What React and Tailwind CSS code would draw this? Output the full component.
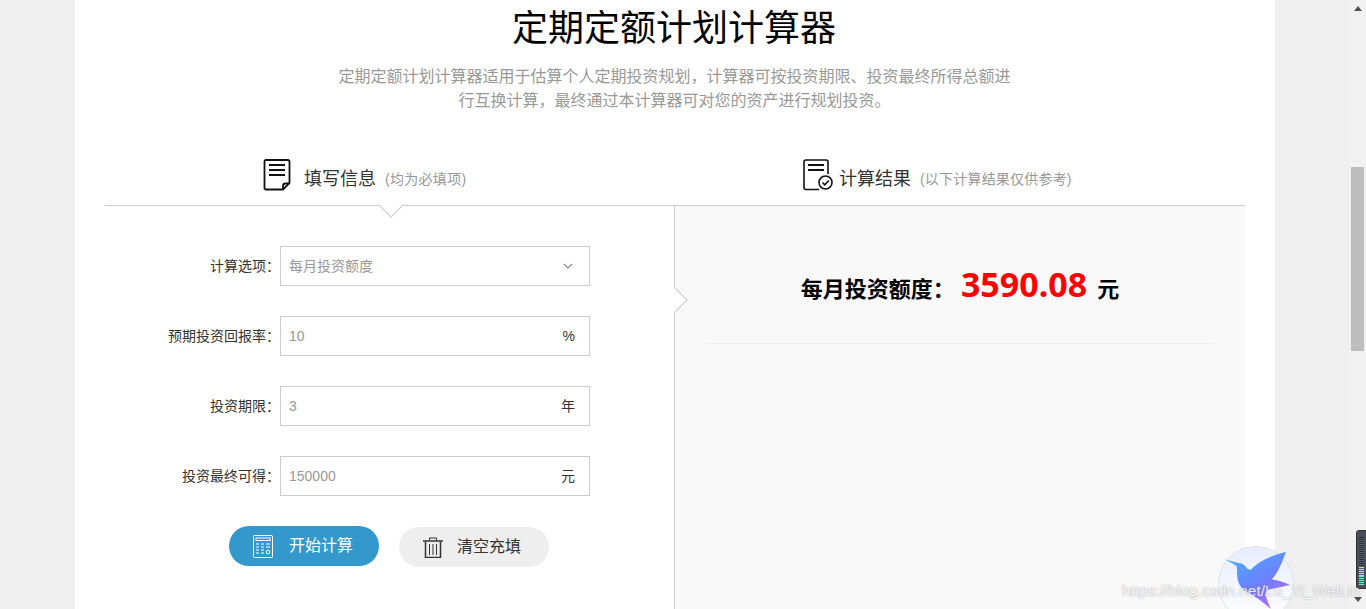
const cjk = { fontFamily: '"Liberation Sans","Noto Sans CJK SC",sans-serif' };

function DocIcon() {
  return (
    <svg width="28" height="32" viewBox="0 0 28 32" fill="none" stroke="#111" strokeWidth="1.800" className="mb-[8px] shrink-0">
      <path d="M3 1h22a1.500 1.500 0 0 1 1.500 1.500V24L20 30.500H3A1.500 1.500 0 0 1 1.500 29V2.500A1.500 1.500 0 0 1 3 1z" />
      <path d="M26.500 24.500h-4a2.500 2.500 0 0 0-2.500 2.500v3.500" />
      <path d="M6 6h16M6 11h16M6 16h16" strokeWidth="2" />
    </svg>
  );
}

function ResultIcon() {
  return (
    <svg width="30" height="32" viewBox="0 0 30 32" fill="none" stroke="#111" strokeWidth="1.600" className="mb-[8px] shrink-0">
      <path d="M16 30.500H3A2 2 0 0 1 1 28.500V3a2 2 0 0 1 2-2h20a2 2 0 0 1 2 2v12" />
      <path d="M5 6h16M5 11h16" strokeWidth="1.800" />
      <circle cx="22.500" cy="23.500" r="6.500" />
      <path d="M19.500 23.500l2.300 2.300 4-4.300" />
    </svg>
  );
}

function CalcIcon() {
  return (
    <svg width="20" height="23" viewBox="0 0 20 23" fill="none" stroke="#fff" strokeWidth="1">
      <rect x="0.500" y="0.500" width="19" height="22" rx="1" />
      <rect x="3" y="3" width="14" height="2.500" />
      <path d="M3 9h3M8 9h3M13 9h4M3 12h3M8 12h3M13 12h4M3 15h3M8 15h3M3 18h3M8 18h3" strokeWidth="1.200" />
      <circle cx="15" cy="17" r="1.800" />
    </svg>
  );
}

function TrashIcon() {
  return (
    <svg width="20" height="21" viewBox="0 0 20 21" fill="none" stroke="#333" strokeWidth="1">
      <path d="M0 4h20" strokeWidth="1.500" />
      <path d="M6.500 3.500V1h7v2.500" />
      <path d="M2.500 4.500V20.500h15V4.500" strokeWidth="1.500" />
      <path d="M6.500 7v11M10 7v11M13.500 7v11" />
    </svg>
  );
}

function Row({ label, children }) {
  return (
    <div className="flex items-center h-[40px] mb-[30px]">
      <label className="w-[175px] text-right text-[14px] text-[#333] shrink-0 whitespace-nowrap">{label}：</label>
      <div className="w-[310px] h-[40px] border border-[#ccc] bg-white flex items-center pl-[8px] pr-[14px] text-[14px]">
        {children}
      </div>
    </div>
  );
}

function Field({ label, value, unit }) {
  return (
    <Row label={label}>
      <input readOnly value={value} className="flex-1 min-w-0 bg-transparent outline-none text-[#999] text-[14px]" />
      <span className="text-[#333] text-[14px]">{unit}</span>
    </Row>
  );
}

export default function App() {
  return (
    <div className="relative flex h-[609px] overflow-hidden bg-[#efefef]" style={cjk}>
      <div className="flex-1 min-w-0">
        <div className="ml-[75px] w-[1200px] h-[609px] bg-white px-[30px] overflow-hidden">
          <h1 className="pr-[2px] text-center text-[36px] leading-[58px] text-black font-normal">定期定额计划计算器</h1>
          <p className="mt-[7px] mx-auto w-[680px] pr-[1px] text-center text-[16px] leading-[24px] text-[#999]">
            定期定额计划计算器适用于估算个人定期投资规划，计算器可按投资期限、投资最终所得总额进行互换计算，最终通过本计算器可对您的资产进行规划投资。
          </p>

          <div className="mt-[36px] grid grid-cols-2 h-[57px] border-b border-[#ccc]">
            <div className="relative flex items-center pl-[158px] pt-[4px]">
              <DocIcon />
              <span className="ml-[13px] text-[18px] text-[#333]">填写信息</span>
              <span className="ml-[9px] mt-[1px] text-[14px] tracking-[0.300px] text-[#999]">(均为必填项)</span>
              <span className="absolute left-[277px] bottom-[-9px] w-[18px] h-[18px] rotate-45 bg-white border-r border-b border-[#ccc]" />
            </div>
            <div className="flex items-center pl-[128px] pt-[4px]">
              <ResultIcon />
              <span className="ml-[6px] text-[18px] text-[#333]">计算结果</span>
              <span className="ml-[9px] mt-[1px] text-[14px] tracking-[0.200px] text-[#999]">(以下计算结果仅供参考)</span>
            </div>
          </div>

          <div className="grid grid-cols-2 h-[404px]">
            <div className="pt-[40px]">
              <Row label="计算选项">
                <span className="flex-1 text-[#999]">每月投资额度</span>
                <svg width="10" height="6" viewBox="0 0 10 6" fill="none" stroke="#888" strokeWidth="1.200" className="mr-[2px]">
                  <path d="M1 1l4 4 4-4" />
                </svg>
              </Row>
              <Field label="预期投资回报率" value="10" unit="%" />
              <Field label="投资期限" value="3" unit="年" />
              <Field label="投资最终可得" value="150000" unit="元" />
              <div className="flex ml-[124px] gap-[20px]">
                <button className="w-[150px] h-[40px] rounded-full bg-[#3399cc] text-white text-[16px] flex items-center pl-[24px]">
                  <CalcIcon />
                  <span className="ml-[16px]">开始计算</span>
                </button>
                <button className="w-[150px] h-[40px] mt-[1px] rounded-full bg-[#eeeeee] text-[#333] text-[16px] flex items-center pl-[24px]">
                  <TrashIcon />
                  <span className="ml-[14px]">清空充填</span>
                </button>
              </div>
            </div>
            <div className="relative -ml-[1px] border-l border-[#ccc] bg-[#f9f9f9] px-[30px]">
              <span className="absolute left-[-9px] top-[85px] w-[18px] h-[18px] rotate-45 bg-white border-t border-r border-[#ccc]" />
              <div className="h-[138px] border-b border-[#eee] flex items-baseline justify-center pt-[53px]">
                <span className="text-[22px] font-bold text-black">每月投资额度：</span>
                <span className="ml-[6px] text-[34px] font-bold text-[#ff0000]" style={{ fontFamily: '"Noto Sans",sans-serif' }}>3590.08</span>
                <span className="ml-[10px] text-[22px] font-bold text-black">元</span>
              </div>
            </div>
          </div>
        </div>
      </div>

      <div className="relative w-[17px] shrink-0 bg-[#f1f1f1]">
        <div className="absolute left-[2px] top-[167px] w-[13px] h-[184px] bg-[#bdbdbd]" />
        <svg className="absolute left-[5px] top-[6px]" width="8" height="6" viewBox="0 0 8 6"><path d="M4 0l4 5H0z" fill="#505050" /></svg>
        <svg className="absolute left-[5px] top-[597px]" width="8" height="6" viewBox="0 0 8 6"><path d="M0 0h8L4 5z" fill="#505050" /></svg>
      </div>

      <div className="absolute left-[1356px] top-[530px] w-[12px] h-[59px] rounded-[3px] bg-[#4a4f5a] border border-[#2c2f36]">
        <div className="mt-[6px] ml-[2px] w-[5px] h-[30px] bg-[repeating-linear-gradient(#2b2e35_0_1px,#5a5e68_1px_2px)]" />
        <div className="ml-[2px] w-[5px] h-[9px] bg-[repeating-linear-gradient(#c8e08a_0_1px,#5a5e68_1px_2px)]" />
        <div className="ml-[2px] w-[5px] h-[9px] bg-[repeating-linear-gradient(#7fe0c0_0_1px,#5a5e68_1px_2px)]" />
      </div>

      <div className="absolute left-[1218px] top-[546px] w-[76px] h-[76px] rounded-full border border-[#dfe3ee] bg-gradient-to-b from-[#e6edff] to-[#ffffff]" />
      <svg className="absolute left-[1106px] top-[520px]" width="260" height="89" viewBox="0 0 780 267">
        <defs>
          <linearGradient id="bird" x1="0.200" y1="0.100" x2="0.800" y2="1">
            <stop offset="0" stopColor="#4fa8ff" />
            <stop offset="0.550" stopColor="#6f7dff" />
            <stop offset="1" stopColor="#c56cf0" />
          </linearGradient>
        </defs>
        <path fill="url(#bird)" d="M355 118l42 11c10-1 20 6 28 18l9 2c22-24 62-43 106-54-6 16-12 32-18 44-6 16-14 28-25 39 20 3 38 9 55 17l-65 14-10 14 17 44c-22-20-44-36-70-50-16-10-28-24-30-45-1-14-1-26-2-33-10-8-24-14-37-21z" />
      </svg>
      <div className="absolute left-[1122px] top-[581px] text-[15.500px] leading-[20px] text-white/80 whitespace-nowrap [text-shadow:0_0_2px_rgba(120,120,120,0.700)]" style={{ fontFamily: '"Liberation Sans",sans-serif' }}>
        https://blog.csdn.net/Lu_Yi_WeiLin
      </div>
    </div>
  );
}
